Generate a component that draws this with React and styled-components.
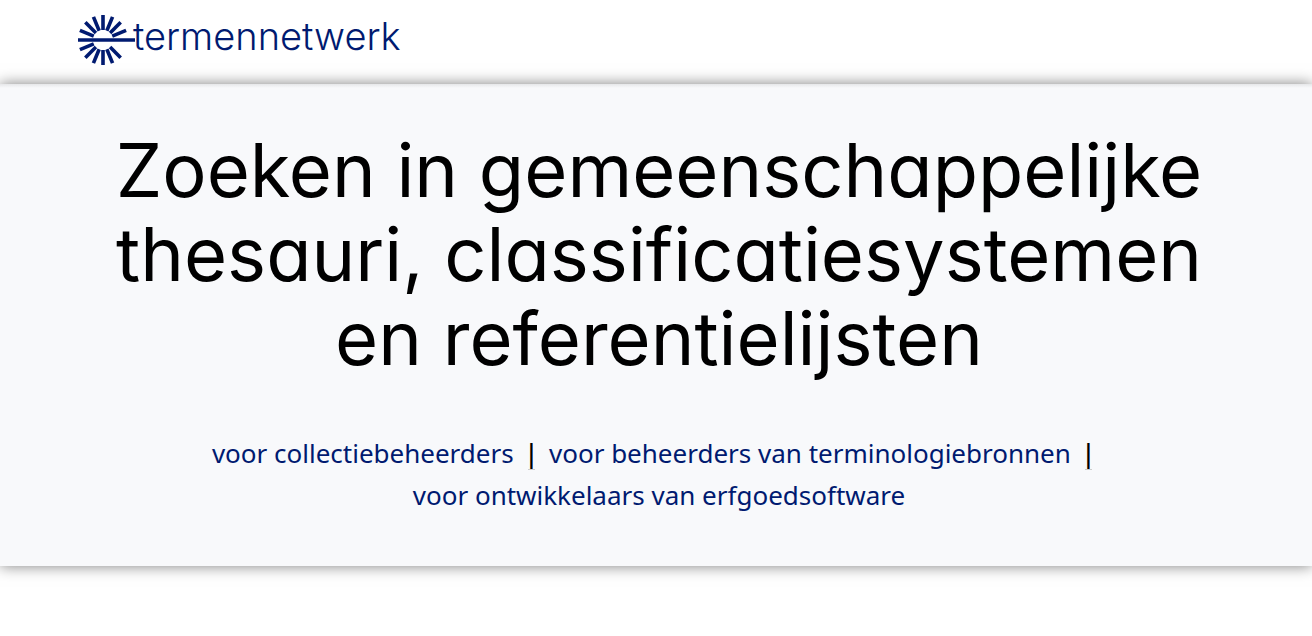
import React from "react";
import styled, { createGlobalStyle } from "styled-components";

const GlobalStyle = createGlobalStyle`
  * { box-sizing: border-box; }
  body { margin: 0; min-height: 100vh; background: #fff; color: #000; font-family: "Noto Sans", "Open Sans", sans-serif; }
`;

const Header = styled.header`
  display: flex;
  align-items: center;
  height: 84px;
  padding: 0 78px 4px;
`;

const Brand = styled.a`
  display: flex;
  align-items: center;
  color: #001a70;
  text-decoration: none;
`;

const Mark = styled.svg`
  flex: none;
  width: 57px;
  height: 52px;
  stroke: currentColor;
  stroke-width: 3.6;
`;

const BrandName = styled.span`
  margin: 0 0 8px -2px;
  font: 300 38px/44px Inter, sans-serif;
  font-feature-settings: "cv11";
`;

const Hero = styled.section`
  display: flex;
  flex-direction: column;
  align-items: center;
  padding: 44px 76px 50px 82px;
  background: linear-gradient(#e6e7e9, #f8f9fb 4px);
  text-align: center;
  box-shadow: 0 0 14px rgba(0, 0, 0, 0.5);
`;

const Title = styled.h1`
  max-width: 1140px;
  margin: 0 0 52px;
  font: 400 74px/84px Inter, sans-serif;
  font-feature-settings: "cv11";
`;

const Audiences = styled.nav`
  max-width: 960px;
  font-size: 26px;
  line-height: 42px;
`;

const AudienceLink = styled.a`
  color: #001a70;
  text-decoration: none;
  white-space: nowrap;
`;

const Divider = styled.span`
  margin: 0 14px;
  border-bottom: 1px solid #ccc;
  font: 28px/28px "Liberation Sans", sans-serif;
`;

const rays = [22.5, 45, 67.5, 90, 112.5, 135, 157.5, 202.5, 225, 247.5, 270, 292.5, 315];

const audiences = [
  "voor collectiebeheerders",
  "voor beheerders van terminologiebronnen",
  "voor ontwikkelaars van erfgoedsoftware",
];

export default function App() {
  return (
    <>
      <GlobalStyle />
      <Header>
        <Brand href="#">
          <Mark viewBox="0 0 57 52" aria-hidden="true">
            {rays.map((angle) => (
              <path key={angle} d="M35 26H50" transform={`rotate(${-angle} 25 26)`} />
            ))}
            <path d="M0 26H57" />
          </Mark>
          <BrandName>termennetwerk</BrandName>
        </Brand>
      </Header>
      <Hero>
        <Title>Zoeken in gemeenschappelijke thesauri, classificatiesystemen en referentielijsten</Title>
        <Audiences>
          {audiences.map((label, index) => (
            <React.Fragment key={label}>
              <AudienceLink href="#">{label}</AudienceLink>
              {index < audiences.length - 1 && <><Divider>|</Divider><wbr /></>}
            </React.Fragment>
          ))}
        </Audiences>
      </Hero>
    </>
  );
}
